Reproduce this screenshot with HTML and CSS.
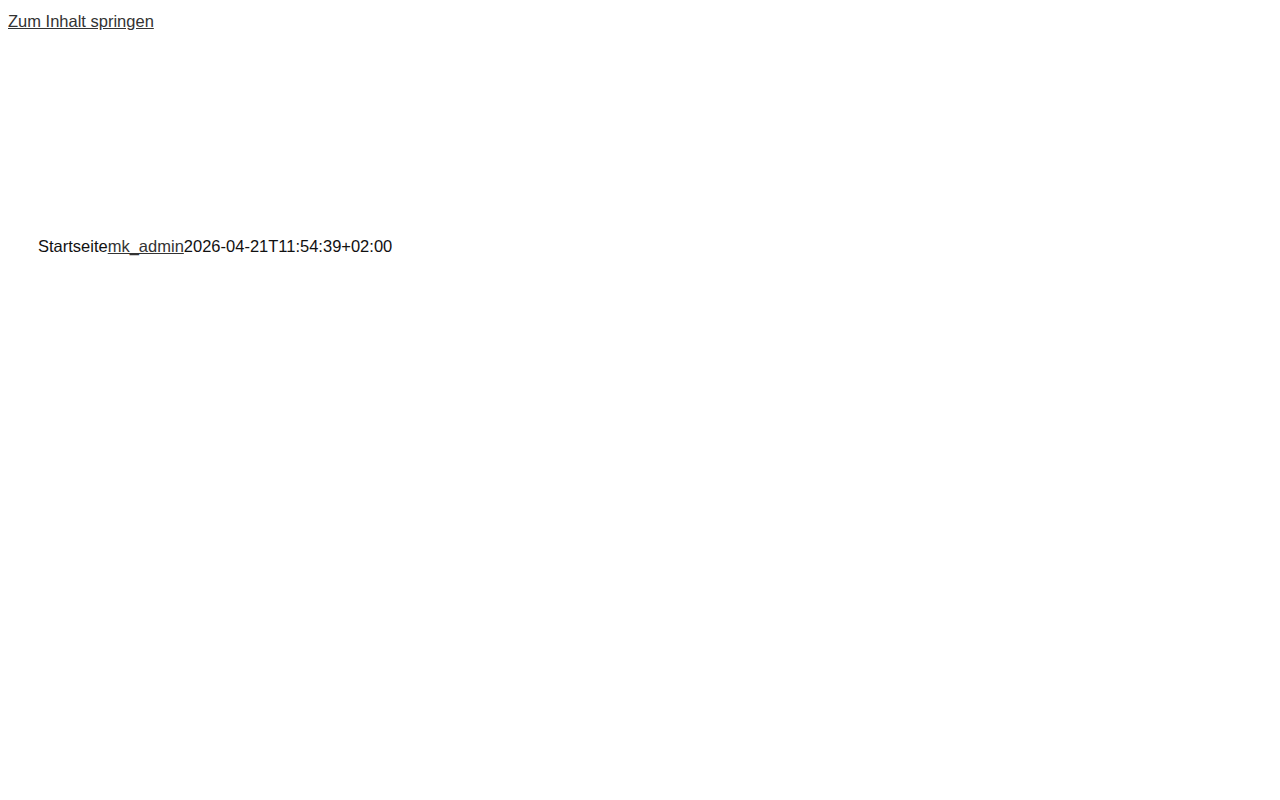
FILE: index.html
```html
<!DOCTYPE html>
<html lang="de">
<head>
<meta charset="utf-8">
<title>Startseite</title>
<link rel="stylesheet" href="styles.css">
</head>
<body>
<a class="skip-link" href="#content">Zum Inhalt springen</a>
<div class="site-header"></div>
<main id="content" class="content">
  <div class="entry-meta"><span class="title">Startseite</span><a class="author" href="#">mk_admin</a><time class="date">2026-04-21T11:54:39+02:00</time></div>
</main>
</body>
</html>
```
FILE: styles.css
```css
body {
  margin: 8px;
  font-family: "Liberation Sans", Arial, sans-serif;
  font-size: 16.5px;
  color: #111;
  background: #fff;
}
a {
  color: #333;
}
.skip-link {
  display: inline-block;
  line-height: 26px;
}
.site-header {
  height: 199px;
}
.content {
  padding-left: 30px;
}
.entry-meta {
  line-height: 26px;
}
```
